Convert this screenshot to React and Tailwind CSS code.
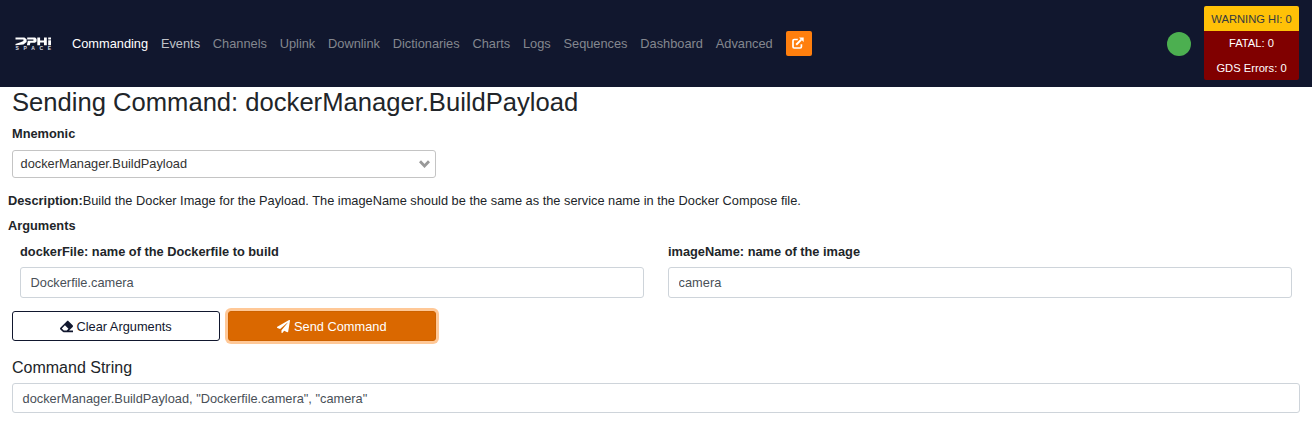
import React from 'react';
import { FaEraser, FaPaperPlane } from 'react-icons/fa';

const LINKS = ['Channels', 'Uplink', 'Downlink', 'Dictionaries', 'Charts', 'Logs', 'Sequences', 'Dashboard', 'Advanced'];

function Logo() {
  return (
    <svg className="ml-[15px] h-[14px] w-[37px] shrink-0" viewBox="0 0 37 14" fill="none" aria-label="DPHI Space">
      <g fill="#fff">
        <path d="M.5.5H9.4L11.6 2.2V5L8.4 7.4.5 8.3V7L5.5 5.2 8.4 4V2.5H.5z" />
        <path d="M12.2.5h8l1.4 1.4v2.6L20 5.8h-4.6l-.6 2.5h-2.9l.9-4.5h5.6V2.5h-6.2z" />
        <path d="M22.3.5h2.8v3h3.9v-3h2.8v7.8H29V5.6h-3.9v2.7h-2.8z" />
        <path d="M33.2.5H36v1.9h-2.8zM33.2 3.2H36v5.1h-2.8z" />
      </g>
      <text x=".6" y="13.2" textLength="35.6" fill="#dcdde2" className="font-['Liberation_Sans',sans-serif] text-[5px] font-bold">SPACE</text>
    </svg>
  );
}

function OpenWindowIcon() {
  return (
    <svg className="mb-[1px] mr-[1px] h-[12px] w-[12px]" viewBox="0 0 12 12" fill="none">
      <path d="M5.8 2.5H2.2Q1 2.5 1 3.7v6Q1 11 2.2 11h6q1.2 0 1.2-1.2V7.3" stroke="#fff" strokeWidth="1.7" />
      <path d="M4.2 7.7 9.3 2.6" stroke="#fff" strokeWidth="2" />
      <path d="M7 .4h4.7v4.7z" fill="#fff" />
    </svg>
  );
}

function Navbar() {
  return (
    <nav className="flex h-[87px] items-center bg-[#11172e] pr-[13px]">
      <Logo />
      <div className="ml-5 flex gap-[12.8px] leading-[19.2px] text-[#84878f]">
        <span className="text-white">Commanding</span>
        <span className="text-[#bfc1c7]">Events</span>
        {LINKS.map((label) => (
          <span key={label}>{label}</span>
        ))}
      </div>
      <button className="ml-[13px] flex h-[25px] w-[26px] items-center justify-center rounded-[2px] bg-[#ff7f0e] text-white">
        <OpenWindowIcon />
      </button>
      <span className="ml-auto size-6 rounded-full bg-[#4caf50]" />
      <div className="mb-[1px] ml-[13px] flex h-[74px] w-[95px] flex-col overflow-hidden rounded-[2px] text-center text-[11.2px] text-white">
        <span className="h-[25px] bg-[#ffc107] leading-[26px] text-[#343a40]">WARNING HI: 0</span>
        <span className="h-[25px] bg-[#800000] leading-[25px]">FATAL: 0</span>
        <span className="h-[24px] bg-[#800000] leading-[24px]">GDS Errors: 0</span>
      </div>
    </nav>
  );
}

function Argument({ label, value }) {
  return (
    <label className="block flex-1">
      <span className="block font-bold leading-[19.2px]">{label}</span>
      <input
        className="mt-[6px] block h-[31px] w-full rounded-[3px] border border-[#ced4da] bg-white px-[9.6px] text-[#495057] outline-none"
        defaultValue={value}
      />
    </label>
  );
}

export default function App() {
  return (
    <div className="h-[432px] overflow-hidden bg-white font-['Liberation_Sans',Arial,sans-serif] text-[12.8px] text-[#212529]">
      <Navbar />
      <main>
        <h1 className="px-3 text-[25.6px] leading-[30.7px]">Sending Command: dockerManager.BuildPayload</h1>
        <div className="mt-[6.4px] px-3 font-bold leading-[19.2px]">Mnemonic</div>
        <div className="ml-3 mt-[6.7px] flex h-[28px] w-[424px] items-center justify-between rounded-[3px] border border-[#c4c4c4] pl-[7.6px] pr-[5px] text-[#333]">
          <span>dockerManager.BuildPayload</span>
          <svg className="h-[8px] w-[11px]" viewBox="0 0 11 8" fill="none" stroke="#999" strokeWidth="2.8">
            <path d="M1 1.2 5.5 6 10 1.2" />
          </svg>
        </div>
        <div className="mt-[13px] px-2 leading-[19.2px]">
          <b>Description:</b>Build the Docker Image for the Payload. The imageName should be the same as the service name in the Docker Compose file.
        </div>
        <div className="mt-[6px] px-2 font-bold leading-[19.2px]">Arguments</div>
        <div className="mt-[6.6px] flex gap-6 px-5">
          <Argument label="dockerFile: name of the Dockerfile to build" value="Dockerfile.camera" />
          <Argument label="imageName: name of the image" value="camera" />
        </div>
        <div className="mt-[13px] flex gap-2 px-3">
          <button className="flex h-[30px] w-[208px] items-center justify-center gap-[3.2px] rounded-[3px] border border-[#11172e] text-[#11172e]">
            <FaEraser className="size-[13px]" />
            Clear Arguments
          </button>
          <button className="flex h-[30px] w-[208px] items-center justify-center gap-[3.6px] rounded-[3px] border border-[#cd6200] bg-[#da6800] text-white shadow-[0_0_0_3px_#ffc897]">
            <FaPaperPlane className="size-[13px]" />
            Send Command
          </button>
        </div>
        <h2 className="mt-[17px] px-3 text-[16px] leading-[19.2px]">Command String</h2>
        <div className="mx-3 mt-[6px] flex h-[30px] items-center rounded-[3px] border border-[#ced4da] px-[9.6px] text-[#495057]">
          dockerManager.BuildPayload, "Dockerfile.camera", "camera"
        </div>
      </main>
    </div>
  );
}
